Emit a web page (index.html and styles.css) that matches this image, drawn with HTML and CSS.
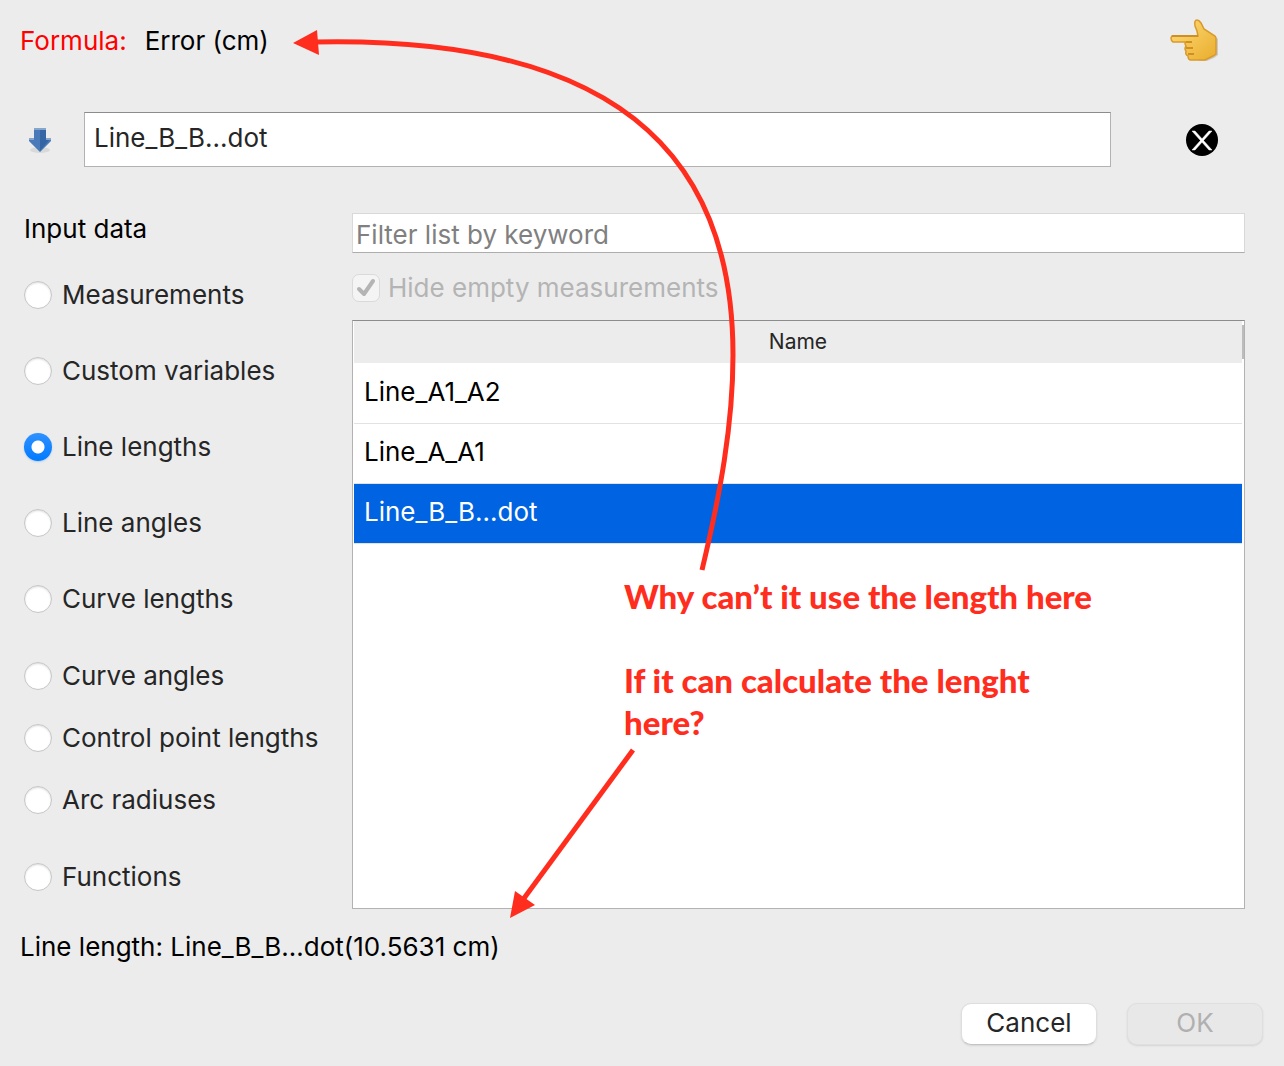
FILE: index.html
```html
<!DOCTYPE html>
<html lang="en">
<head>
    <meta charset="UTF-8">
    <meta name="viewport" content="width=device-width, initial-scale=1.0">
    <title>Edit formula</title>
    <link rel="stylesheet" href="styles.css">
</head>
<body>
    <form class="dialog">
        <header class="result">
            <span class="result-label">Formula:</span>
            <output class="result-value" for="formula">Error (cm)</output>
            <svg class="hand" viewBox="0 0 50 44" aria-hidden="true">
                <defs>
                    <linearGradient id="skin" x1="0" y1="0" x2="1" y2="1">
                        <stop offset="0" stop-color="#ffdc7a"/>
                        <stop offset="1" stop-color="#e9ad2c"/>
                    </linearGradient>
                </defs>
                <path d="M32 3 L36 11 L47 18 L49 20 V36 L45 39 L38 42 L30 42" fill="#c9c9c9"/>
                <path d="M3 17 H29 L28 12 L26 7 Q25 1 28 1 Q30 1 32 4 L35 10 L46 17 Q47 18 47 20 V35 L44 37 L36 41 H22 Q19 41 19 37 Q16 36 17 32 Q15 30 17 27 Q15 24 17 23 H4 Q2 22 2 19 Z" fill="url(#skin)" stroke="#d99a2b" stroke-width="1.5"/>
                <path d="M3 17 H29 M17 23 H23 M17 29 H24 M19 35 H25" fill="none" stroke="#cf8f22" stroke-width="2"/>
            </svg>
        </header>

        <div class="formula">
            <button class="icon-button" type="button" aria-label="Insert variable into formula">
                <svg class="down" viewBox="0 0 24 28" aria-hidden="true">
                    <ellipse cx="12" cy="24" rx="10" ry="3" fill="#d9d9d9"/>
                    <path d="M6 2 H18 V12 H23 V15 L12 26 L1 15 V12 H6 Z" fill="#4a7ab8"/>
                    <path d="M12 3 H18 V13 H22 L12 25 Z" fill="#3465a4"/>
                    <path d="M6 2 H18 V4 H6 Z M1 12 H6 V14 H1 Z M18 12 H23 V14 H18 Z" fill="#87a4ca"/>
                </svg>
            </button>
            <textarea class="formula-text" id="formula" rows="1" aria-label="Formula">Line_B_B...dot</textarea>
            <button class="icon-button clear" type="button" aria-label="Clear formula">
                <svg class="cross" viewBox="0 0 32 32" aria-hidden="true">
                    <circle cx="16" cy="16" r="16"/>
                    <path d="M6 7 H9 L26 26 H23 Z M23 7 H26 L9 26 H6 Z" fill="#fff" stroke="#fff" stroke-width="0.5"/>
                </svg>
            </button>
        </div>

        <main class="content">
            <fieldset class="inputs">
                <legend class="inputs-title">Input data</legend>
                <div class="groups">
                    <div class="group">
                        <label class="choice"><input type="radio" name="input">Measurements</label>
                        <label class="choice"><input type="radio" name="input">Custom variables</label>
                        <label class="choice"><input type="radio" name="input" checked>Line lengths</label>
                        <label class="choice"><input type="radio" name="input">Line angles</label>
                        <label class="choice"><input type="radio" name="input">Curve lengths</label>
                    </div>
                    <div class="group tight">
                        <label class="choice"><input type="radio" name="input">Curve angles</label>
                        <label class="choice"><input type="radio" name="input">Control point lengths</label>
                        <label class="choice"><input type="radio" name="input">Arc radiuses</label>
                    </div>
                    <div class="group">
                        <label class="choice"><input type="radio" name="input">Functions</label>
                    </div>
                </div>
            </fieldset>

            <section class="variables">
                <input class="filter" type="text" placeholder="Filter list by keyword" aria-label="Filter list by keyword">
                <label class="hide-empty">
                    <span class="tick">
                        <input type="checkbox" checked disabled>
                        <svg class="tick-mark" viewBox="0 0 28 28" aria-hidden="true">
                            <path d="M7 15 L12 20 L21 7" fill="none" stroke="#b4b4b4" stroke-width="4" stroke-linecap="round" stroke-linejoin="round"/>
                        </svg>
                    </span>
                    Hide empty measurements
                </label>
                <div class="list">
                    <table>
                        <thead>
                            <tr><th>Name</th></tr>
                        </thead>
                        <tbody>
                            <tr><td>Line_A1_A2</td></tr>
                            <tr><td>Line_A_A1</td></tr>
                            <tr class="selected"><td>Line_B_B...dot</td></tr>
                        </tbody>
                    </table>
                    <span class="scroll-thumb"></span>
                </div>
            </section>
        </main>

        <p class="description">Line length: Line_B_B...dot(10.5631 cm)</p>

        <footer class="actions">
            <button class="push" type="button">Cancel</button>
            <button class="push" type="submit" disabled>OK</button>
        </footer>
    </form>

    <!-- notes drawn over the dialog -->
    <svg class="arrows" width="1284" height="1066" aria-hidden="true">
        <g fill="none" stroke="#ff2d1e" stroke-width="5">
            <path d="M702 570 C720 495 733 425 733 355 C733 180 645 35 315 42"/>
            <path d="M633 750 L522 901"/>
        </g>
        <path d="M293 43 L317 30 L319 55 Z M510 918 L515 891 L535 905 Z" fill="#ff2d1e"/>
    </svg>
    <div class="note">
        <p>Why can’t it use the length here</p>
        <p>If it can calculate the lenght here?</p>
    </div>
</body>
</html>
```

FILE: styles.css
```css
* {
    box-sizing: border-box;
}
body {
    position: relative;
    margin: 0;
    background-color: #ececec;
    color: #000000;
    font-family: Inter, "Liberation Sans", sans-serif;
    font-size: 26px;
    line-height: 30px;
}
input, textarea, button {
    margin: 0;
    font: inherit;
}
p {
    margin: 0;
}
svg {
    display: block;
}
.dialog {
    display: flex;
    flex-direction: column;
    min-height: 100vh;
    padding: 19px 20px 21px;
}
.result {
    display: flex;
    align-items: center;
    height: 44px;
    padding-right: 45px;
    gap: 18px;
}
.result-label {
    color: #ff0000;
}
.hand {
    width: 50px;
    height: 44px;
    margin-left: auto;
}
.formula {
    display: flex;
    align-items: center;
    margin-top: 49px;
    padding-right: 46px;
}
.icon-button {
    flex: none;
    width: 40px;
    padding: 0;
    border: none;
    background: none;
}
.down {
    width: 24px;
    height: 28px;
    margin: 0 auto;
}
.formula-text {
    flex: 1;
    height: 55px;
    margin: 0 75px 0 24px;
    padding: 10px 9px;
    border: 1px solid #b2b2b2;
    border-top-color: #8c8c8c;
    background-color: #ffffff;
    color: #262626;
    resize: none;
    outline: none;
    overflow: hidden;
}
.clear {
    width: 32px;
}
.cross {
    width: 32px;
    height: 32px;
}
.content {
    flex: 1;
    display: flex;
    margin-top: 46px;
    padding-right: 19px;
}
.inputs {
    flex: none;
    width: 332px;
    margin: 0;
    padding: 0 4px;
    border: none;
}
.inputs-title {
    padding: 1px 0 0;
}
.groups {
    display: flex;
    flex-direction: column;
    gap: 47px;
    padding-top: 36px;
}
.group {
    display: flex;
    flex-direction: column;
    gap: 46px;
}
.tight {
    gap: 32px;
}
.choice {
    display: flex;
    align-items: center;
    gap: 10px;
    color: #262626;
}
.choice input {
    appearance: none;
    width: 28px;
    height: 28px;
    border: 1px solid #c6c6c6;
    border-radius: 50%;
    background-color: #ffffff;
    box-shadow: inset 0 1px 2px #dddddd;
}
.choice input:checked {
    border: none;
    background: radial-gradient(circle, #ffffff 6px, transparent 7px), linear-gradient(#2f91ff, #007aff);
    box-shadow: 0 1px 2px #b5cdea;
}
.variables {
    flex: 1;
    display: flex;
    flex-direction: column;
    min-width: 0;
}
.filter {
    width: 100%;
    height: 40px;
    padding: 3px 3px 0;
    border: 1px solid #d9d9d9;
    border-bottom-color: #adadad;
    background-color: #ffffff;
    outline: none;
}
.filter::placeholder {
    color: #808080;
    opacity: 1;
}
.hide-empty {
    display: flex;
    align-items: center;
    gap: 8px;
    margin: 20px 0 17px;
    color: #b4b4b4;
}
.tick {
    position: relative;
    width: 28px;
    height: 28px;
}
.tick input {
    display: block;
    appearance: none;
    width: 28px;
    height: 28px;
    border: 1px solid #dadada;
    border-radius: 7px;
    background-color: #f4f4f4;
}
.tick-mark {
    position: absolute;
    inset: 0;
}
.list {
    position: relative;
    flex: 1;
    padding: 0 2px 0 1px;
    border: 1px solid #b2b2b2;
    border-top-color: #8c8c8c;
    background-color: #ffffff;
}
table {
    width: 100%;
    border-collapse: collapse;
}
th {
    height: 42px;
    padding: 0;
    background-color: #ececec;
    color: #262626;
    font-size: 21px;
    font-weight: 400;
}
td {
    height: 60px;
    padding: 0 10px 2px;
    border-bottom: 1px solid #e2e2e2;
}
.selected td {
    background-color: #0063e1;
    color: #ffffff;
}
.scroll-thumb {
    position: absolute;
    top: 4px;
    right: 0;
    width: 2px;
    height: 34px;
    background-color: #bcbcbc;
}
.description {
    margin-top: 23px;
}
.actions {
    display: flex;
    justify-content: flex-end;
    gap: 30px;
    margin-top: 41px;
    padding-right: 1px;
}
.push {
    width: 136px;
    height: 42px;
    padding: 0 0 3px;
    border: 1px solid #dedede;
    border-bottom-color: #c4c4c4;
    border-radius: 10px;
    background-color: #ffffff;
    color: #262626;
    box-shadow: 0 1px 2px #d4d4d4;
}
.push:disabled {
    border-color: #dfdfdf;
    background-color: #e8e8e8;
    color: #b0b0b0;
}
.arrows {
    position: absolute;
    top: 0;
    left: 0;
    pointer-events: none;
}
.note {
    position: absolute;
    top: 575px;
    left: 624px;
    width: 480px;
    color: #ff2d1e;
    font-family: Lato, "Open Sans", sans-serif;
    font-size: 33px;
    font-weight: 900;
    line-height: 42px;
}
.note p + p {
    margin-top: 42px;
}
```
